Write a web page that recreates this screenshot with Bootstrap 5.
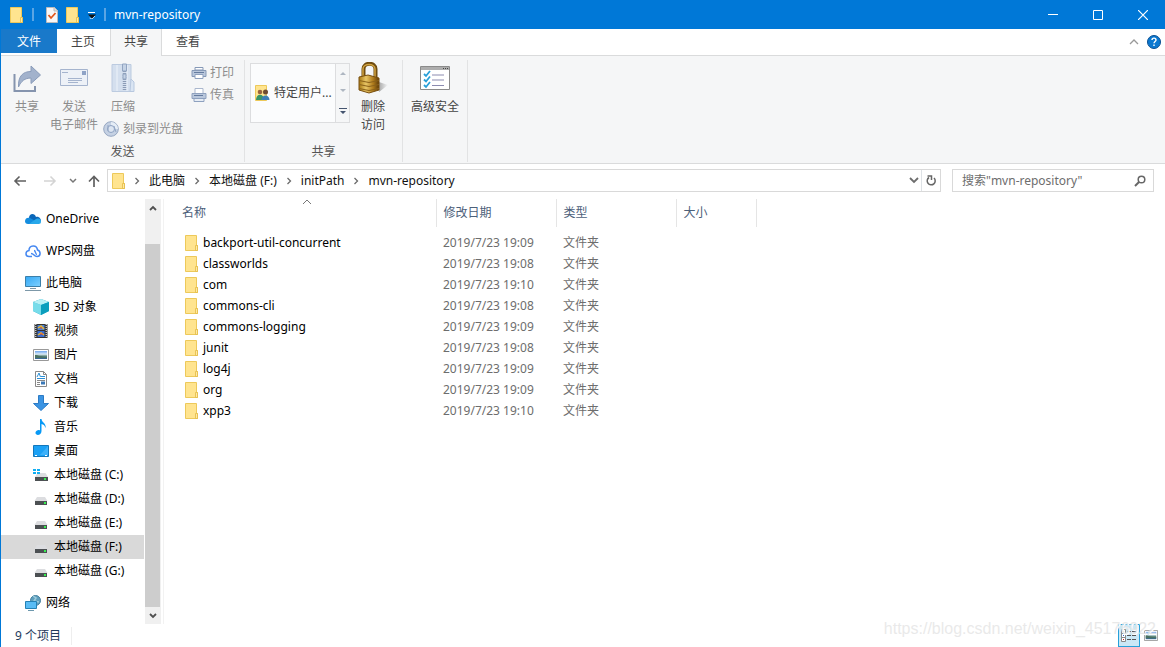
<!DOCTYPE html>
<html lang="zh-CN">
<head>
<meta charset="utf-8">
<meta name="viewport" content="width=device-width, initial-scale=1">
<title>mvn-repository</title>
<link href="https://cdn.jsdelivr.net/npm/bootstrap@5.3.0/dist/css/bootstrap.min.css" rel="stylesheet">
<style>
  body { font-family: "Noto Sans", "Noto Sans CJK SC", sans-serif; font-size: 12px; line-height: 18px; color: #000; background: #fff; }
  button, input { font: inherit; color: inherit; border: 0; background: none; padding: 0; }
  a { color: inherit; text-decoration: none; }
  svg { display: block; flex: none; }
  .explorer { border-left: 1px solid #0078d7; overflow: hidden; }
  .title-bar { height: 29px; background: #0078d7; color: #fff; padding-left: 9px; gap: 8px; }
  .title-sep { width: 2px; height: 13px; border: 1px solid #5aa5e4; }
  .win-btn { width: 45px; height: 28px; display: grid; place-items: center; }
  .tab-row { height: 27px; border-bottom: 1px solid #dadbdc; }
  .tab-row .nav-link { font-size: 12px; color: #444; height: 27px; padding: 4px 14px 4px 13px; border: 1px solid transparent; border-width: 0 1px; border-radius: 0; }
  .tab-row .nav-link.file { background: #1979ca; color: #fff; height: 24px; padding: 4px 15px; }
  .tab-row .nav-link.active { background: #f5f6f7; border-color: #dadbdc; padding: 4px 13px; }
  .ribbon { background: #f5f6f7; border-bottom: 1px solid #dadbdc; height: 108px; padding: 4px 0 1px; color: #444; }
  .ribbon-group { border-right: 1px solid #e2e3e4; }
  .group-label { height: 19px; line-height: 18px; color: #555; text-align: center; }
  .off { color: #8d8d8d; }
  .big { display: flex; flex-direction: column; align-items: center; }
  .big svg { margin: 2px 0 4px; }
  .send-tools { padding: 0 10px 0 3px; }
  .share-tools { padding: 0 14px 0 5px; }
  .tool { display: flex; align-items: center; gap: 3px; }
  .gallery { width: 100px; height: 60px; border: 1px solid #dcdddf; background: #fbfcfd; margin-top: 3px; }
  .gallery-scroll { width: 14px; border-left: 1px solid #dcdddf; background: #f5f6f7; }
  .address-row { height: 35px; padding: 5px 11px 0 12px; }
  .up-btn { margin: 0 7px 0 11px; }
  .box { height: 23px; border: 1px solid #d9d9d9; }
  .crumbs { font-size: 12px; color: #111; gap: 9px; }
  .search-box { width: 202px; padding: 0 7px 0 9px; margin-left: 11px; }
  .search-box input { width: 160px; outline: 0; }
  .search-box input::placeholder { color: #6d6d6d; opacity: 1; }
  .side { width: 144px; padding-top: 8px; flex: none; }
  .side a { display: flex; align-items: center; height: 24px; padding-left: 24px; gap: 5px; }
  .side .sub { padding-left: 32px; }
  .side .top + .top, .side .sub + .top { margin-top: 8px; }
  .side .current { background: #d9d9d9; width: 143px; }
  .scroll-bar { width: 16px; background: #f0f0f0; flex: none; }
  .scroll-thumb { background: #cdcdcd; margin: 29px 1px 0 0; }
  .files { border-left: 1px solid #f2f2f2; margin-left: 2px; min-width: 0; }
  .file-table { table-layout: fixed; width: 100%; border-collapse: collapse; }
  .file-table th { font-weight: 400; color: #4c607a; height: 28px; padding: 0 0 0 7px; border-right: 1px solid #e5e5e5; }
  .file-table th:first-child { padding-left: 18px; }
  .file-table th:last-child { border: 0; }
  .file-table td { height: 21px; padding: 0 0 0 7px; color: #6d6d6d; }
  .file-table td:first-child { padding-left: 21px; color: #000; }
  .file-table tbody::before { content: ""; display: block; height: 5px; }
  .sort-mark { position: absolute; top: 0; left: 138px; }
  .status { height: 23px; padding: 0 7px 0 14px; color: #1e395b; }
  .item-count { padding-right: 10px; border-right: 1px solid #eee; }
  .view-on { width: 22px; height: 23px; border: 1px solid #26a0da; background: #cbe8f6; display: grid; place-items: center; }
  .watermark { position: absolute; right: 9px; bottom: 9px; font: 16px/18px "Liberation Sans", sans-serif; color: #e4e4e4cc; text-shadow: 1px 1px 0 #fff; pointer-events: none; }
</style>
</head>
<body>
<svg width="0" height="0" class="position-absolute" aria-hidden="true">
  <defs>
    <linearGradient id="gold" x2="1"><stop offset="0" stop-color="#a87914"/><stop offset=".35" stop-color="#e9c767"/><stop offset=".7" stop-color="#b07c1c"/><stop offset="1" stop-color="#5f3c08"/></linearGradient>
    <linearGradient id="scene" x2="0" y2="1"><stop offset="0" stop-color="#6fa6ef"/><stop offset=".4" stop-color="#dcecf8"/><stop offset=".65" stop-color="#5c8577"/><stop offset="1" stop-color="#32619b"/></linearGradient>
    <linearGradient id="screen" x2="1" y2="1"><stop offset="0" stop-color="#33a8f5"/><stop offset="1" stop-color="#7ed0ff"/></linearGradient>
    <linearGradient id="shade"><stop offset="0" stop-color="#aaa"/><stop offset="1" stop-color="#f5f6f7"/></linearGradient>
  </defs>
  <symbol id="folder" viewBox="0 0 14 16"><path d="M.5.5h11v10h1v5H.5z" fill="#ffe48f" stroke="#edc95a"/><path d="M10.500 15V10.500h2V15.500h-2z" fill="#ffe9a4" stroke="#e3bb45" stroke-width=".8"/></symbol>
  <symbol id="drive" viewBox="0 0 16 16"><path d="M4 6h8l2.500 4h-13z" fill="#dcdde0"/><path d="M2 10h12v4H2z" fill="#4c5053"/><rect x="11" y="11" width="2" height="2" fill="#37ef50"/></symbol>
  <symbol id="chev" viewBox="0 0 6 8"><path d="M1.500 1l3 3-3 3" fill="none" stroke="#6b6b6b" stroke-width="1.300"/></symbol>
  <symbol id="photo" viewBox="0 0 16 12"><path d="M.5.5h15v11H.5z" fill="#fff" stroke="#999"/><path d="M2 2h12v8H2z" fill="url(#scene)"/><path d="M2 6c3 0 6 2 12 2v1H2z" fill="#4a7263"/></symbol>
</svg>

<div class="explorer d-flex flex-column vh-100 position-relative">
  <header class="title-bar d-flex align-items-center">
    <svg width="14" height="16"><use href="#folder"/></svg>
    <i class="title-sep"></i>
    <button class="ms-1" aria-label="属性"><svg width="12" height="16" viewBox="0 0 12 16"><path d="M.5.5h8l3 3v12H.5z" fill="#f7f7f7" stroke="#bbb"/><path d="M8 .5V4h3.500" fill="#ddd" stroke="#bbb"/><path d="M2.500 8l2.500 3 4.500-5" fill="none" stroke="#e2561b" stroke-width="1.800"/></svg></button>
    <button aria-label="新建文件夹"><svg width="14" height="16"><use href="#folder"/></svg></button>
    <button class="ms-n1" aria-label="自定义快速访问工具栏"><svg width="8" height="8" viewBox="0 0 8 8"><path d="M0 1.500h7" stroke="#fff"/><path d="M0 3.500h8L4 7.500z" fill="#111"/><path d="M1.500 7L4 8l3-3" fill="none" stroke="#fff" stroke-width=".7"/></svg></button>
    <i class="title-sep ms-n1"></i>
    <span class="ms-n1">mvn-repository</span>
    <div class="ms-auto d-flex">
      <button class="win-btn" aria-label="最小化"><svg width="10" height="10"><path d="M0 4.500h10" stroke="#fff"/></svg></button>
      <button class="win-btn" aria-label="最大化"><svg width="10" height="10"><path d="M.5.5h9v9h-9z" fill="none" stroke="#fff"/></svg></button>
      <button class="win-btn" aria-label="关闭"><svg width="10" height="10"><path d="M0 0l10 10M10 0L0 10" stroke="#fff" stroke-width="1.200"/></svg></button>
    </div>
  </header>

  <nav class="tab-row d-flex">
    <a class="nav-link file" href="#">文件</a>
    <a class="nav-link" href="#">主页</a>
    <a class="nav-link active" href="#">共享</a>
    <a class="nav-link" href="#">查看</a>
    <div class="ms-auto d-flex align-items-center gap-2 pe-1">
      <button aria-label="折叠功能区"><svg width="10" height="6"><path d="M1 5l4-4 4 4" fill="none" stroke="#999" stroke-width="1.300"/></svg></button>
      <button class="me-n1" aria-label="帮助"><svg width="14" height="14" viewBox="0 0 14 14"><circle cx="7" cy="7" r="6.500" fill="#0b78d0" stroke="#0a4f91"/><path d="M5 5c0-2.500 4-2.500 4 0 0 1.500-2 1.500-2 3.300M7 9.500v1.600" fill="none" stroke="#fff" stroke-width="1.400"/></svg></button>
    </div>
  </nav>

  <section class="ribbon d-flex">
    <div class="ribbon-group d-flex flex-column">
      <div class="send-tools off d-flex align-items-start flex-grow-1">
        <button class="big px-2"><svg width="30" height="32" viewBox="0 0 30 32"><path d="M2.500 12v17H23v-5" fill="none" stroke="#8594ae" stroke-width="2"/><path d="M6.500 25C6 14 11 9.500 19 9.500V4l9.500 9L19 21.500V16C13 16 9 19 6.500 25z" fill="#a2b2cc" stroke="#899bb9"/></svg>共享</button>
        <button class="big"><svg width="30" height="32" viewBox="0 0 30 32"><path d="M1.500 7.500h27v16h-27z" fill="#edf1f7" stroke="#a5b4ce"/><path d="M3 10.500h6M9 16.500h14M9 18.500h14M9 20.500h10" stroke="#a5b4ce"/><path d="M23 9h4v4h-4z" fill="#8fa3c6"/></svg>发送<br>电子邮件</button>
        <div class="ms-1">
          <button class="big ms-2"><svg width="26" height="32" viewBox="0 0 26 32"><path d="M2 2.500h19v27H2z" fill="#d4dfee" stroke="#bccbe0"/><path d="M7 3v26M17 3v26" stroke="#edf3fa"/><path d="M21 17l3 3v9.500h-4z" fill="#dae5f3" stroke="#b8c8df"/><path d="M14.500 5v23" stroke="#8b9bb5" stroke-width="3.500" stroke-dasharray="1 1"/><path d="M12.500 2h4v7h-4zM13 12h3v5h-3z" fill="#c4d2e5" stroke="#91a4c1"/></svg>压缩</button>
          <button class="tool pt-1"><svg width="18" height="16" viewBox="0 0 16 16"><circle cx="8" cy="8" r="7.300" fill="#c5d1e3" stroke="#96a7c2"/><path d="M8 1a7 7 0 017 7H8z" fill="#e5edf6"/><circle cx="8" cy="8" r="3.500" fill="#dce5f1" stroke="#8da1c2"/><path d="M5 4v6M11 5l2 6" stroke="#93a7c5"/></svg>刻录到光盘</button>
        </div>
        <div class="ms-2">
          <button class="tool pt-1"><svg width="16" height="12" viewBox="0 0 16 12"><path d="M4 .5h8V3H4z" fill="#fff" stroke="#8699b7"/><path d="M1 3.500h14v6H1z" fill="#b9c7dc" stroke="#8699b7"/><path d="M3 5.500h10" stroke="#667c9f"/><path d="M4 7.500h8v4H4z" fill="#fff" stroke="#8ea1bf"/></svg>打印</button>
          <button class="tool mt-1"><svg width="16" height="14" viewBox="0 0 16 14"><path d="M4 .5h8V6H4z" fill="#fff" stroke="#aab7cd"/><path d="M1 5.500h14v5H1z" fill="#b9c7dc" stroke="#8fa1be"/><path d="M3 7.500h9" stroke="#667c9f"/><path d="M3 10.500h10v3H3z" fill="#e7edf5" stroke="#8ea1bf"/></svg>传真</button>
        </div>
      </div>
      <div class="group-label">发送</div>
    </div>

    <div class="ribbon-group d-flex flex-column">
      <div class="share-tools d-flex flex-grow-1 align-items-start">
        <div class="gallery d-flex">
          <button class="d-flex align-items-center flex-grow-1 gap-1 ps-1 text-nowrap"><svg width="15" height="16" viewBox="0 0 15 16"><path d="M.5.5h11v15H.5z" fill="#ffe48f" stroke="#edc95a"/><circle cx="5" cy="7" r="2.300" fill="#9b653e"/><circle cx="10.500" cy="7" r="2.500" fill="#6f4b31"/><path d="M1 15c0-7 8-7 8 0z" fill="#3a9467"/><path d="M6.500 15c0-6 8-6 8 0z" fill="#3c7fb8"/></svg>特定用户...</button>
          <button class="gallery-scroll d-flex flex-column justify-content-around align-items-center" aria-label="更多用户"><svg width="6" height="4"><path d="M0 4l3-3 3 3z" fill="#aeb6c1"/></svg><svg width="6" height="4"><path d="M0 0l3 3 3-3z" fill="#aeb6c1"/></svg><svg width="8" height="8"><path d="M0 1h8v1H0zM1 4h6L4 7z" fill="#44546f"/></svg></button>
        </div>
        <button class="big ms-2"><svg width="30" height="32" viewBox="0 1 30 32"><path d="M21 21l9 3-9 7z" fill="url(#shade)"/><path d="M5.500 17V8c0-7 12-7 12 0v9" fill="none" stroke="#6f4c10" stroke-width="4"/><path d="M5 17V8c0-6 12-6 12 0v9" fill="none" stroke="#d1a341" stroke-width="1.500"/><path d="M1 16l9-2 11 3v12l-10 3-10-3z" fill="url(#gold)" stroke="#795011"/><path d="M1 19.500l10 2 10-2M1 23.500l10 2 10-2M1 27.500l10 2 10-2" fill="none" stroke="#8b621a"/></svg>删除<br>访问</button>
      </div>
      <div class="group-label">共享</div>
    </div>

    <div class="ribbon-group px-1">
      <button class="big px-1"><svg width="32" height="32" viewBox="0 1 32 32"><path d="M1.500 5.500h29v23h-29z" fill="#fff" stroke="#8b8b8b"/><path d="M2 6h28v3H2z" fill="#adadad"/><path d="M24 7.500h1m1 0h1m1 0h1" stroke="#444"/><path d="M13 14h12M13 19h12M13 24.500h12" stroke="#8b8bb0"/><path d="M5 13l2 2 4-5M5 18.500l2 2 4-5M5 24l2 2 4-5" fill="none" stroke="#28a0d9" stroke-width="1.800"/></svg>高级安全</button>
    </div>
  </section>

  <div class="address-row d-flex align-items-start">
    <div class="d-flex align-items-center box border-0">
      <button aria-label="后退"><svg width="14" height="12"><path d="M13 6H2M6.500 1.500L2 6l4.500 4.500" fill="none" stroke="#606060" stroke-width="1.600"/></svg></button>
      <button class="ms-3" aria-label="前进"><svg width="14" height="12"><path d="M1 6h11M7.500 1.500L12 6l-4.500 4.500" fill="none" stroke="#d4d4d4" stroke-width="1.600"/></svg></button>
      <button class="ms-2 ps-1" aria-label="最近位置"><svg width="8" height="6"><path d="M1 1l3 3 3-3" fill="none" stroke="#777" stroke-width="1.500"/></svg></button>
      <button class="up-btn" aria-label="上移"><svg width="12" height="12"><path d="M6 12V2M1 6.500L6 1.500l5 5" fill="none" stroke="#606060" stroke-width="1.700"/></svg></button>
    </div>
    <div class="box d-flex flex-grow-1 align-items-center">
      <svg class="ms-1" width="14" height="16"><use href="#folder"/></svg>
      <div class="crumbs d-flex align-items-center flex-grow-1 ms-2">
        <svg width="6" height="8"><use href="#chev"/></svg><a href="#">此电脑</a>
        <svg width="6" height="8"><use href="#chev"/></svg><a href="#">本地磁盘 (F:)</a>
        <svg width="6" height="8"><use href="#chev"/></svg><a href="#">initPath</a>
        <svg width="6" height="8"><use href="#chev"/></svg><a href="#">mvn-repository</a>
      </div>
      <button aria-label="以前的位置"><svg width="12" height="7"><path d="M1 1l4 4 4-4" fill="none" stroke="#6d6d6d" stroke-width="1.800"/></svg></button>
      <button class="border-start h-100 px-1" aria-label="刷新"><svg width="10" height="12" viewBox="0 0 10 12"><path d="M3 2.500A4 4 0 108 3" fill="none" stroke="#666" stroke-width="1.500"/><path d="M1.500 1h4v4" fill="none" stroke="#666" stroke-width="1.500"/></svg></button>
    </div>
    <label class="box search-box d-flex align-items-center justify-content-between">
      <input type="text" placeholder="搜索&quot;mvn-repository&quot;" aria-label="搜索">
      <svg width="12" height="12"><circle cx="7.500" cy="4.500" r="3.300" fill="none" stroke="#666" stroke-width="1.500"/><path d="M5 7l-4 4" stroke="#666" stroke-width="1.900"/></svg>
    </label>
  </div>

  <main class="d-flex flex-grow-1">
    <nav class="side">
      <a class="top" href="#"><svg width="16" height="16" viewBox="0 0 16 16"><path d="M4 7c0-5 6-5 7-1 3-1 5 2 5 4H2z" fill="#0a66b8"/><path d="M0 10c0-3 3-4 5-3l9 5c-1 1-2 1-3 1H3c-2 0-3-1-3-3z" fill="#148ddf"/><path d="M4 13l7-5c3-1 5 0 5 2.500S14 13 13 13z" fill="#28a8ea"/></svg>OneDrive</a>
      <a class="top" href="#"><svg width="16" height="16" viewBox="0 0 16 16"><path d="M7 13.500H4C0 13.500 0 8 4 7.500c0-6 8-6 8.500-.5C16 8 16 13.500 12 13.500c-3 0-3-3-6-3" fill="none" stroke="#4688f1" stroke-width="1.500"/><path d="M9 7.500c2 0 1 4 3 4" fill="none" stroke="#4688f1" stroke-width="1.300"/></svg>WPS网盘</a>
      <a class="top" href="#"><svg width="16" height="16" viewBox="0 0 16 16"><path d="M.5 1.500h15v10H.5z" fill="url(#screen)" stroke="#3b7fa9"/><path d="M5 13.500h6M0 15.500h16" stroke="#7d98a8"/></svg>此电脑</a>
      <a class="sub" href="#"><svg width="16" height="16" viewBox="0 0 16 16"><path d="M8 0l8 3v9l-8 4-8-4V3z" fill="#16a8c7"/><path d="M0 3l8 3v10l-8-4z" fill="#77dcea"/><path d="M0 3l8-3 8 3-8 3z" fill="#b9f0f5"/><path d="M8 6l8-3v9l-8 4z" fill="#0b9ebd"/></svg>3D 对象</a>
      <a class="sub" href="#"><svg width="16" height="16" viewBox="0 0 16 16"><path d="M1.500 1h13v14h-13z" fill="#333"/><path d="M2.800 1v14M13.200 1v14" stroke="#fff" stroke-dasharray="1 1"/><path d="M4.500 2h7v5h-7z" fill="#4b83d5"/><path d="M4.500 8h7v6h-7z" fill="#386bd0"/><path d="M5 5l3-2 3 3M5 12l3-2 3 2" stroke="#e9b52e" stroke-width="1.500" fill="none"/><path d="M8 4v2M7 11h3" stroke="#dc4331"/></svg>视频</a>
      <a class="sub" href="#"><svg width="16" height="12"><use href="#photo"/></svg>图片</a>
      <a class="sub" href="#"><svg width="16" height="16" viewBox="0 0 16 16"><path d="M2.500.5h8l3 3v12h-11z" fill="#fff" stroke="#888"/><path d="M10.500.5v3h3" fill="none" stroke="#888"/><path d="M4 6l2-4 1.500 4M8 5.500h4M4 7.500h8" fill="none" stroke="#2b8fd6"/><path d="M4 9.500h8M4 11.500h3M4 13.500h3" stroke="#888"/><path d="M8 10.500h4v3H8z" fill="#3a78b7"/></svg>文档</a>
      <a class="sub" href="#"><svg width="16" height="16" viewBox="0 0 16 16"><path d="M5.500.5h5v8h5L8 15.500.5 8.500h5z" fill="#3b94e3" stroke="#2c7bc5"/></svg>下载</a>
      <a class="sub" href="#"><svg width="16" height="16" viewBox="0 0 16 16"><path d="M7 0h1.500c.5 4 5 4 4 9-1-3-2-3.500-4-4v7c0 5-6.500 5-6 1.500.4-2 3-3 4.500-2z" fill="#0899f5"/></svg>音乐</a>
      <a class="sub" href="#"><svg width="16" height="12" viewBox="0 0 16 12"><path d="M.5.5h15v11H.5z" fill="#1ba1f5" stroke="#1377bb"/><path d="M7 10l8-9v9z" fill="#3db1fa"/><path d="M2 10.500h2m8 0h2" stroke="#fff"/></svg>桌面</a>
      <a class="sub" href="#"><svg width="16" height="16" viewBox="0 0 16 16"><path d="M4.500 6h8l2.500 4H2z" fill="#dcdde0"/><path d="M2 10h13v4H2z" fill="#4c5053"/><rect x="11" y="11" width="2" height="2" fill="#37ef50"/><path d="M0 2h3v2H0zM4 2h3v2H4zM0 5h3v2H0zM4 5h3v2H4z" fill="#10aef3"/></svg>本地磁盘 (C:)</a>
      <a class="sub" href="#"><svg width="16" height="16"><use href="#drive"/></svg>本地磁盘 (D:)</a>
      <a class="sub" href="#"><svg width="16" height="16"><use href="#drive"/></svg>本地磁盘 (E:)</a>
      <a class="sub current" href="#"><svg width="16" height="16"><use href="#drive"/></svg>本地磁盘 (F:)</a>
      <a class="sub" href="#"><svg width="16" height="16"><use href="#drive"/></svg>本地磁盘 (G:)</a>
      <a class="top" href="#"><svg width="16" height="16" viewBox="0 0 16 16"><circle cx="10.500" cy="5.500" r="5" fill="#5f9fbd" stroke="#447f9e"/><path d="M8 1l3 2-2 3 5 1" stroke="#9dcbdc" fill="none" stroke-width="1.500"/><path d="M.5 6.500h11v7H.5z" fill="#59bcf5" stroke="#2581b4"/><path d="M3 15.500h6" stroke="#6d98ad"/></svg>网络</a>
    </nav>
    <div class="scroll-bar d-flex flex-column align-items-stretch">
      <svg class="mx-auto mt-1" width="8" height="12"><path d="M1 7l3-3 3 3" fill="none" stroke="#505050" stroke-width="1.800"/></svg>
      <div class="scroll-thumb flex-grow-1"></div>
      <svg class="mx-auto my-1" width="8" height="9"><path d="M1 3l3 3 3-3" fill="none" stroke="#505050" stroke-width="1.800"/></svg>
    </div>
    <div class="files flex-grow-1 position-relative">
      <svg class="sort-mark" width="10" height="6"><path d="M1 5l4-4 4 4" fill="none" stroke="#777"/></svg>
      <table class="file-table">
        <colgroup><col style="width:272px"><col style="width:120px"><col style="width:120px"><col style="width:80px"><col></colgroup>
        <thead><tr><th>名称</th><th>修改日期</th><th>类型</th><th>大小</th><th></th></tr></thead>
        <tbody id="rows"></tbody>
      </table>
    </div>
  </main>

  <footer class="status d-flex align-items-center">
    <span class="item-count">9 个项目</span>
    <div class="ms-auto d-flex align-items-center gap-1">
      <button class="view-on" aria-label="详细信息"><svg width="16" height="14" viewBox="0 0 16 14"><path d="M.5.500h4v4h-4zM.5 4.500h4v4h-4zM.5 8.500h4v4h-4z" fill="#fff" stroke="#888"/><path d="M6 2.500h4m1 0h4M6 6.500h4m1 0h4M6 10.500h4m1 0h4" stroke="#555"/><path d="M2 2.500h1" stroke="#555"/><path d="M2 6.500h1" stroke="#36c"/><path d="M2 10.500h1" stroke="#c22"/></svg></button>
      <button aria-label="大缩略图"><svg width="14" height="11" viewBox="0 0 16 12" preserveAspectRatio="none"><use href="#photo"/></svg></button>
    </div>
  </footer>
  <div class="watermark">https://blog.csdn.net/weixin_45176922</div>
</div>
<script>
  const folders = [["backport-util-concurrent", "09"], ["classworlds", "08"], ["com", "10"], ["commons-cli", "08"], ["commons-logging", "09"], ["junit", "08"], ["log4j", "09"], ["org", "09"], ["xpp3", "10"]];
  document.getElementById("rows").innerHTML = folders.map(([name, min]) =>
    `<tr><td><a href="#" class="d-flex align-items-center gap-1"><svg width="14" height="16"><use href="#folder"/></svg>${name}</a></td><td>2019/7/23 19:${min}</td><td>文件夹</td><td></td><td></td></tr>`).join("");
</script>
<script src="https://cdn.jsdelivr.net/npm/bootstrap@5.3.0/dist/js/bootstrap.bundle.min.js"></script>
</body>
</html>
